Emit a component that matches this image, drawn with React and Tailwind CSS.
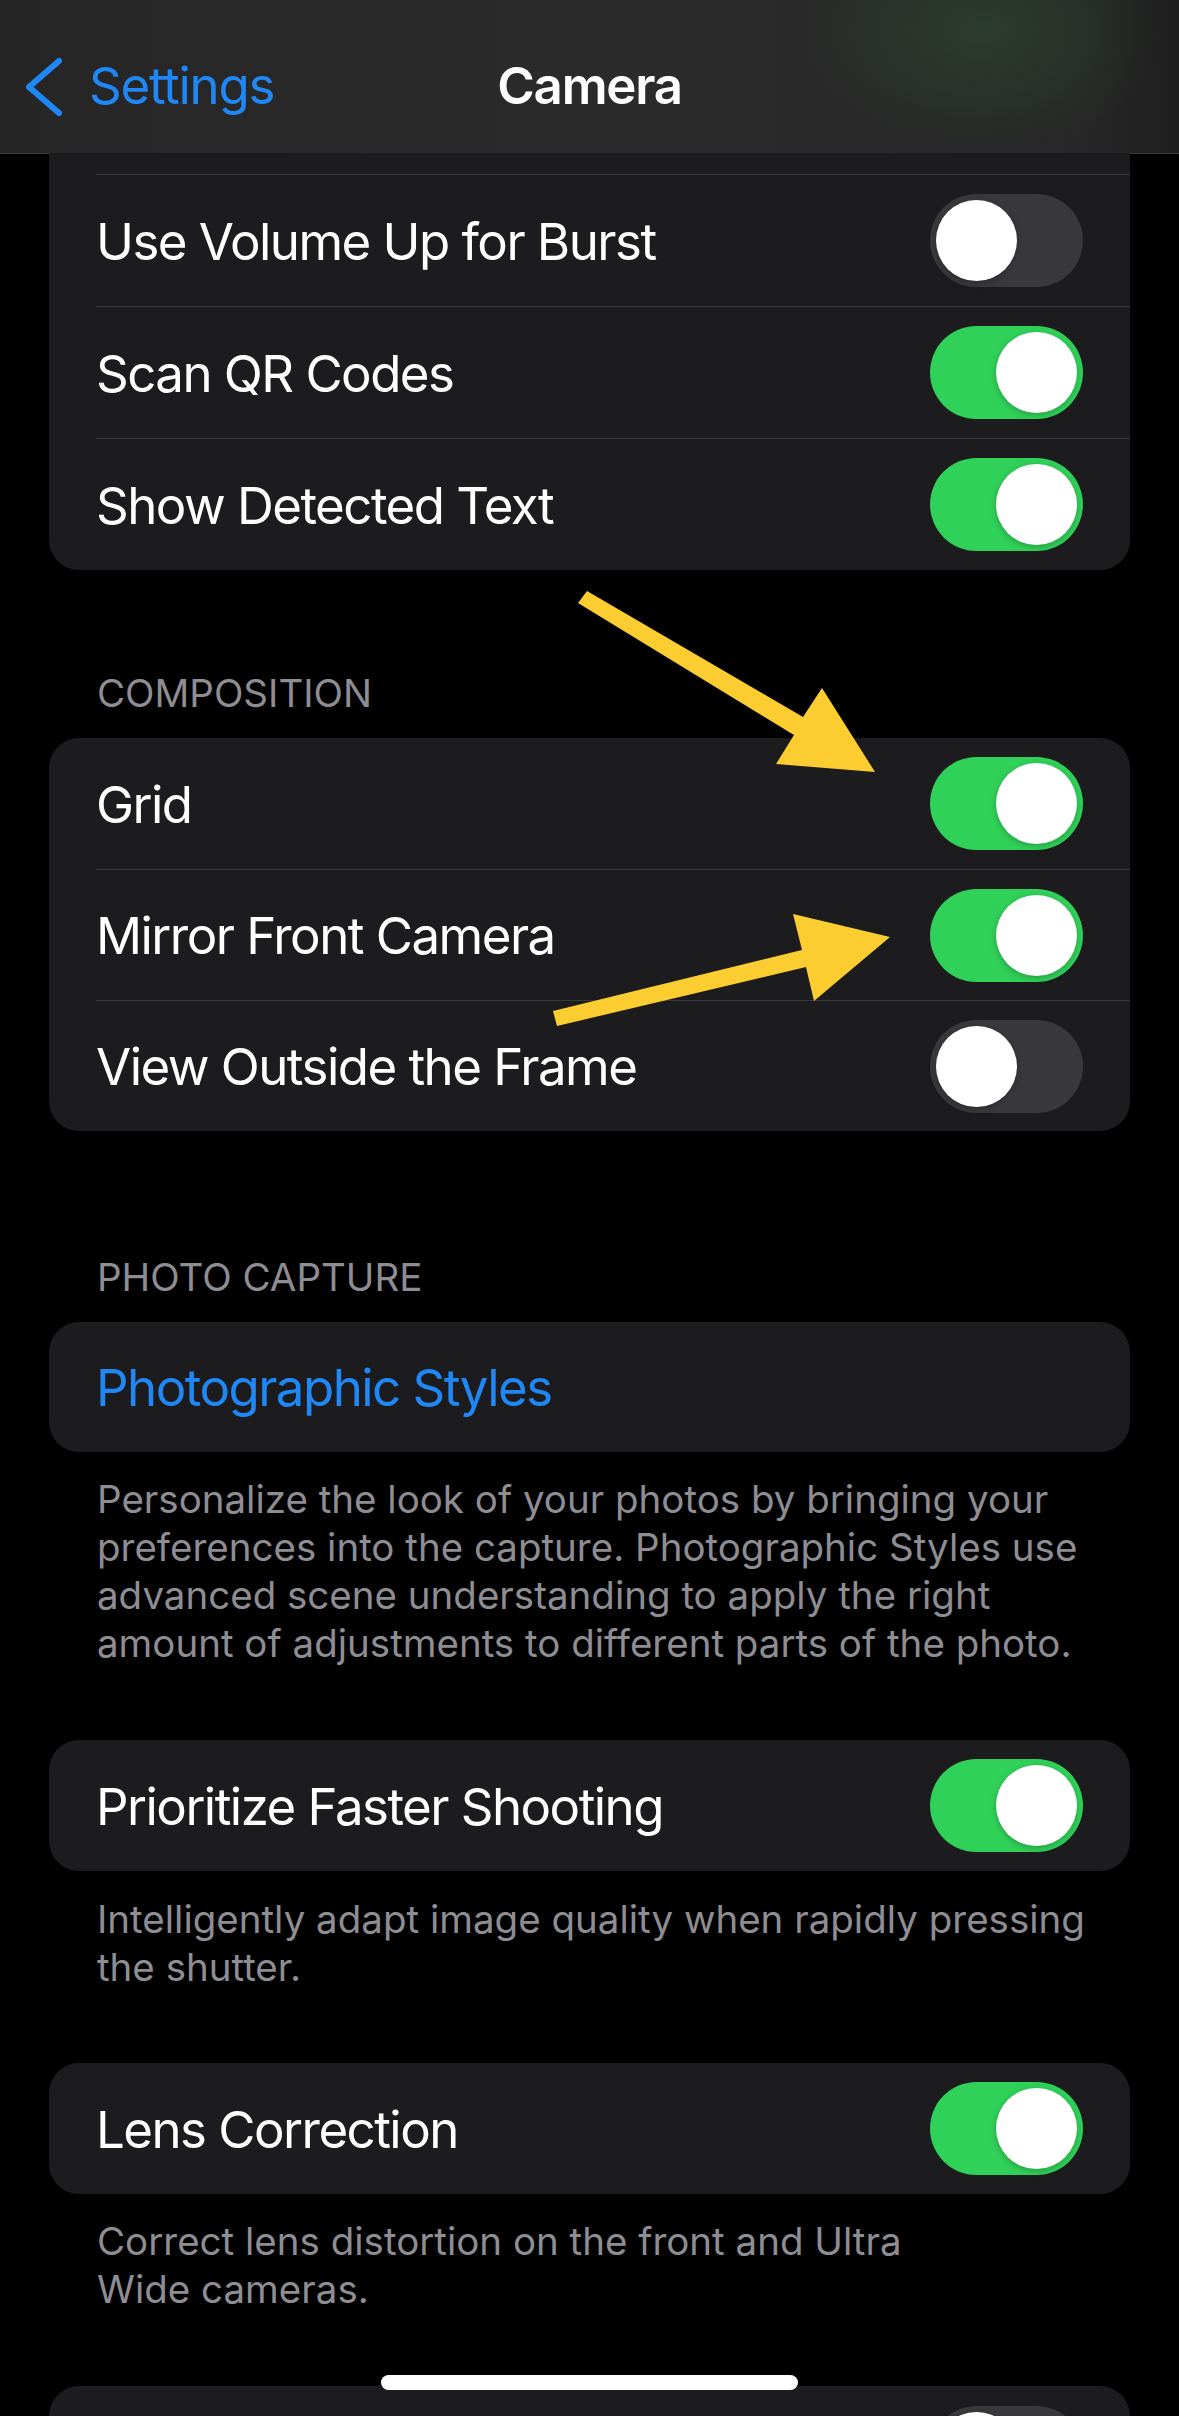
import React from 'react'

const font = { fontFamily: 'Inter, "Noto Sans", "Liberation Sans", sans-serif' }

function Toggle({ on }) {
  return (
    <div className={`relative w-[153px] h-[93px] shrink-0 rounded-full ${on ? 'bg-[#30d158]' : 'bg-[#39393d]'}`}>
      <div className={`absolute top-[6px] size-[81px] rounded-full bg-white shadow-[0_2px_6px_rgba(0,0,0,0.25)] ${on ? 'right-[6px]' : 'left-[6px]'}`} />
    </div>
  )
}

function Row({ label, on, first, h = 'h-[132px]' }) {
  return (
    <div className="pl-[47px]">
      <div className={`${h} flex items-center justify-between pr-[47px] ${first ? '' : 'border-t border-[#38383a]'}`}>
        <span className="pt-[3px] text-[51px] text-white tracking-[-0.03em]">{label}</span>
        <Toggle on={on} />
      </div>
    </div>
  )
}

function Header({ children, className }) {
  return (
    <div className={`pl-[48px] text-[38.5px] leading-[48px] text-[#8d8d93] uppercase ${className}`}>
      {children}
    </div>
  )
}

function Footer({ lines, className }) {
  return (
    <div className={`pl-[48px] text-[38.5px] leading-[48px] text-[#8d8d93] ${className}`}>
      {lines.map(l => <div key={l} className="whitespace-nowrap">{l}</div>)}
    </div>
  )
}

export default function App() {
  return (
    <div style={font} className="relative w-[1179px] h-[2416px] overflow-hidden bg-black">
      {/* nav bar */}
      <div className="h-[154px] border-b border-[#3c3c3e] bg-[image:radial-gradient(ellipse_180px_120px_at_983px_30px,rgba(48,90,52,0.4),transparent),linear-gradient(90deg,#262626_0%,#2b2b2b_55%,#272727_92%,#1e1e1e_100%)]">
        <div className="pt-[56px] grid grid-cols-[1fr_auto_1fr] items-center h-[116px]">
          <div className="flex items-center pl-[22px]">
            <svg width="42" height="60" viewBox="0 0 42 60">
              <polyline points="37,5 7,31 37,57" fill="none" stroke="#1f88f6" strokeWidth="6" strokeLinecap="round" strokeLinejoin="round" />
            </svg>
            <span className="ml-[25px] text-[51px] leading-[60px] text-[#1f88f6] tracking-[-0.025em]">Settings</span>
          </div>
          <div className="text-[51px] leading-[60px] font-semibold text-white tracking-[-0.025em]">Camera</div>
          <div />
        </div>
      </div>

      <div className="mx-[49px]">
        {/* camera options tail */}
        <div className="bg-[#1c1c1e] rounded-b-[30px] -mt-px">
          <div className="h-[21px]" />
          <Row label="Use Volume Up for Burst" on={false} />
          <Row label="Scan QR Codes" on />
          <Row label="Show Detected Text" on />
        </div>

        <Header className="mt-[99px]">Composition</Header>
        <div className="mt-[21px] bg-[#1c1c1e] rounded-[30px]">
          <Row label="Grid" on first h="h-[131px]" />
          <Row label="Mirror Front Camera" on h="h-[131px]" />
          <Row label="View Outside the Frame" on={false} h="h-[131px]" />
        </div>

        <Header className="mt-[122px]">Photo Capture</Header>
        <div className="mt-[21px] h-[130px] bg-[#1c1c1e] rounded-[30px] flex items-center pl-[47px]">
          <span className="pt-[3px] text-[51px] text-[#1f88f6] tracking-[-0.03em]">Photographic Styles</span>
        </div>
        <Footer
          className="mt-[23px]"
          lines={[
            'Personalize the look of your photos by bringing your',
            'preferences into the capture. Photographic Styles use',
            'advanced scene understanding to apply the right',
            'amount of adjustments to different parts of the photo.',
          ]}
        />

        <div className="mt-[73px] bg-[#1c1c1e] rounded-[30px]">
          <Row label="Prioritize Faster Shooting" on first h="h-[131px]" />
        </div>
        <Footer
          className="mt-[24px]"
          lines={['Intelligently adapt image quality when rapidly pressing', 'the shutter.']}
        />

        <div className="mt-[72px] bg-[#1c1c1e] rounded-[30px]">
          <Row label="Lens Correction" on first h="h-[131px]" />
        </div>
        <Footer
          className="mt-[23px]"
          lines={['Correct lens distortion on the front and Ultra', 'Wide cameras.']}
        />

        <div className="mt-[73px] bg-[#1c1c1e] rounded-t-[30px]">
          <Row label="" on={false} first />
        </div>
      </div>

      {/* annotation arrows */}
      <svg className="absolute left-0 top-0 pointer-events-none" width="1179" height="2416">
        <polygon points="587,591 803,717 822,688 875,772 776,764 794,735 578,603" fill="#fccd30" />
        <polygon points="553,1011 802,950 793,914 890,937 814,1001 806,967 557,1026" fill="#fccd30" />
      </svg>

      {/* home indicator */}
      <div className="absolute left-[381px] top-[2375px] w-[417px] h-[15px] rounded-full bg-white" />
    </div>
  )
}
